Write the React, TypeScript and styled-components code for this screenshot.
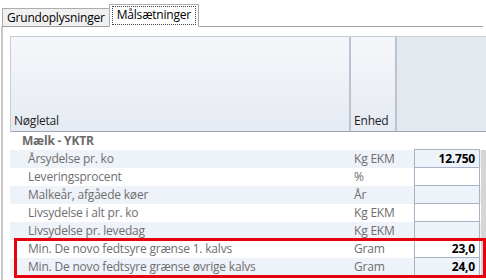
import React from "react";
import styled, { createGlobalStyle } from "styled-components";

const GlobalStyle = createGlobalStyle`
    body {
        margin: 0;
        background: #fff;
        font-family: "Open Sans", "Noto Sans", sans-serif;
        font-size: 12px;
    }
`;

const Page = styled.div`
    width: 486px;
    height: 280px;
    overflow: hidden;
    background: #fff;
`;

const TabStrip = styled.div`
    display: flex;
    align-items: flex-end;
    height: 26px;
    padding-left: 2px;
    position: relative;
    z-index: 1;
`;

const Tab = styled.div<{ $active?: boolean }>`
    height: ${(p) => (p.$active ? "23px" : "18px")};
    padding: 0 ${(p) => (p.$active ? "2px" : "4px")};
    display: flex;
    align-items: center;
    box-sizing: border-box;
    border: 1px solid #adadad;
    border-bottom: ${(p) => (p.$active ? "1px solid #fff" : "none")};
    background: ${(p) => (p.$active ? "#fff" : "#f0f0f0")};
    margin-bottom: ${(p) => (p.$active ? "-1px" : "0")};
    margin-left: ${(p) => (p.$active ? "-1px" : "0")};
    color: #000;
    letter-spacing: -0.2px;
`;

const FocusLabel = styled.span`
    border: 1px dotted #444;
    padding: 1px 4px 2px 4px;
    line-height: 14px;
`;

const Panel = styled.div`
    border-top: 1px solid #a0a0a0;
    border-left: 2px solid #c8c8c8;
    margin-left: 1px;
    margin-right: 3px;
    padding: 9px 0 0 7px;
    height: 260px;
`;

const Grid = styled.div`
    margin-right: -3px;
`;

const Header = styled.div`
    display: flex;
    height: 94px;
    border-top: 1px solid #c5cedb;
    border-left: 1px solid #c5cedb;
    border-bottom: 1px solid #9aa6b8;
`;

const HeadCell = styled.div<{ $w: number }>`
    width: ${(p) => p.$w}px;
    box-sizing: border-box;
    background: linear-gradient(#f5f7fa, #e6eaf2);
    border-right: 2px solid #b9c3d2;
    display: flex;
    align-items: flex-end;
    padding: 0 0 2px 3px;
    color: #1f1f1f;
    letter-spacing: -0.2px;
`;

const HeadFiller = styled.div`
    flex: 1;
    background: #e4e9f0;
`;

const Body = styled.div`
    display: flex;
`;

const Rows = styled.div`
    flex: 1;
`;

const Scrollbar = styled.div`
    width: 5px;
    margin-top: 18px;
    background: #d6d6d6;
`;

const GroupRow = styled.div`
    height: 18px;
    line-height: 18px;
    padding-left: 12px;
    font-weight: bold;
    color: #6a6a6a;
    letter-spacing: -0.2px;
`;

const Row = styled.div<{ $alt: boolean }>`
    display: flex;
    height: 18px;
    line-height: 17px;
    background: ${(p) => (p.$alt ? "#eef2f9" : "#fff")};
    color: #6e6e6e;
    letter-spacing: -0.2px;
`;

const Label = styled.div`
    width: 340px;
    padding-left: 18px;
    box-sizing: border-box;
    white-space: nowrap;
    overflow: hidden;
`;

const Unit = styled.div`
    width: 64px;
    padding-left: 4px;
    box-sizing: border-box;
`;

const Value = styled.div<{ $first: boolean }>`
    width: 66px;
    box-sizing: border-box;
    border: 1px solid #a7b3c5;
    border-top: ${(p) => (p.$first ? "1px solid #a7b3c5" : "none")};
    margin-top: ${(p) => (p.$first ? "-1px" : "0")};
    height: ${(p) => (p.$first ? "19px" : "18px")};
    text-align: right;
    padding-right: 4px;
    font-weight: bold;
    color: #000;
`;

const Highlight = styled.div`
    position: relative;
    &::after {
        content: "";
        position: absolute;
        top: -2px;
        bottom: -2px;
        left: 4px;
        right: -5px;
        border: 3px solid #e8000b;
        pointer-events: none;
    }
`;

type Item = { label: string; unit: string; value?: string };

const items: Item[] = [
	{ label: "Årsydelse pr. ko", unit: "Kg EKM", value: "12.750" },
	{ label: "Leveringsprocent", unit: "%" },
	{ label: "Malkeår, afgåede køer", unit: "År" },
	{ label: "Livsydelse i alt pr. ko", unit: "Kg EKM" },
	{ label: "Livsydelse pr. levedag", unit: "Kg EKM" },
];

const highlighted: Item[] = [
	{ label: "Min. De novo fedtsyre grænse 1. kalvs", unit: "Gram", value: "23,0" },
	{ label: "Min. De novo fedtsyre grænse øvrige kalvs", unit: "Gram", value: "24,0" },
];

const DataRow = ({ item, index }: { item: Item; index: number }) => (
	<Row $alt={index % 2 === 0}>
		<Label>{item.label}</Label>
		<Unit>{item.unit}</Unit>
		<Value $first={index === 0}>{item.value}</Value>
	</Row>
);

const App = () => {
	return (
		<Page>
			<GlobalStyle />
			<TabStrip>
				<Tab>Grundoplysninger</Tab>
				<Tab $active>
					<FocusLabel>Målsætninger</FocusLabel>
				</Tab>
			</TabStrip>
			<Panel>
				<Grid>
					<Header>
						<HeadCell $w={340}>Nøgletal</HeadCell>
						<HeadCell $w={46}>Enhed</HeadCell>
						<HeadFiller />
					</Header>
					<Body>
						<Rows>
							<GroupRow>Mælk - YKTR</GroupRow>
							{items.map((item, i) => (
								<DataRow key={item.label} item={item} index={i} />
							))}
							<Highlight>
								{highlighted.map((item, i) => (
									<DataRow key={item.label} item={item} index={items.length + i} />
								))}
							</Highlight>
						</Rows>
						<Scrollbar />
					</Body>
				</Grid>
			</Panel>
		</Page>
	);
};

export default App;
